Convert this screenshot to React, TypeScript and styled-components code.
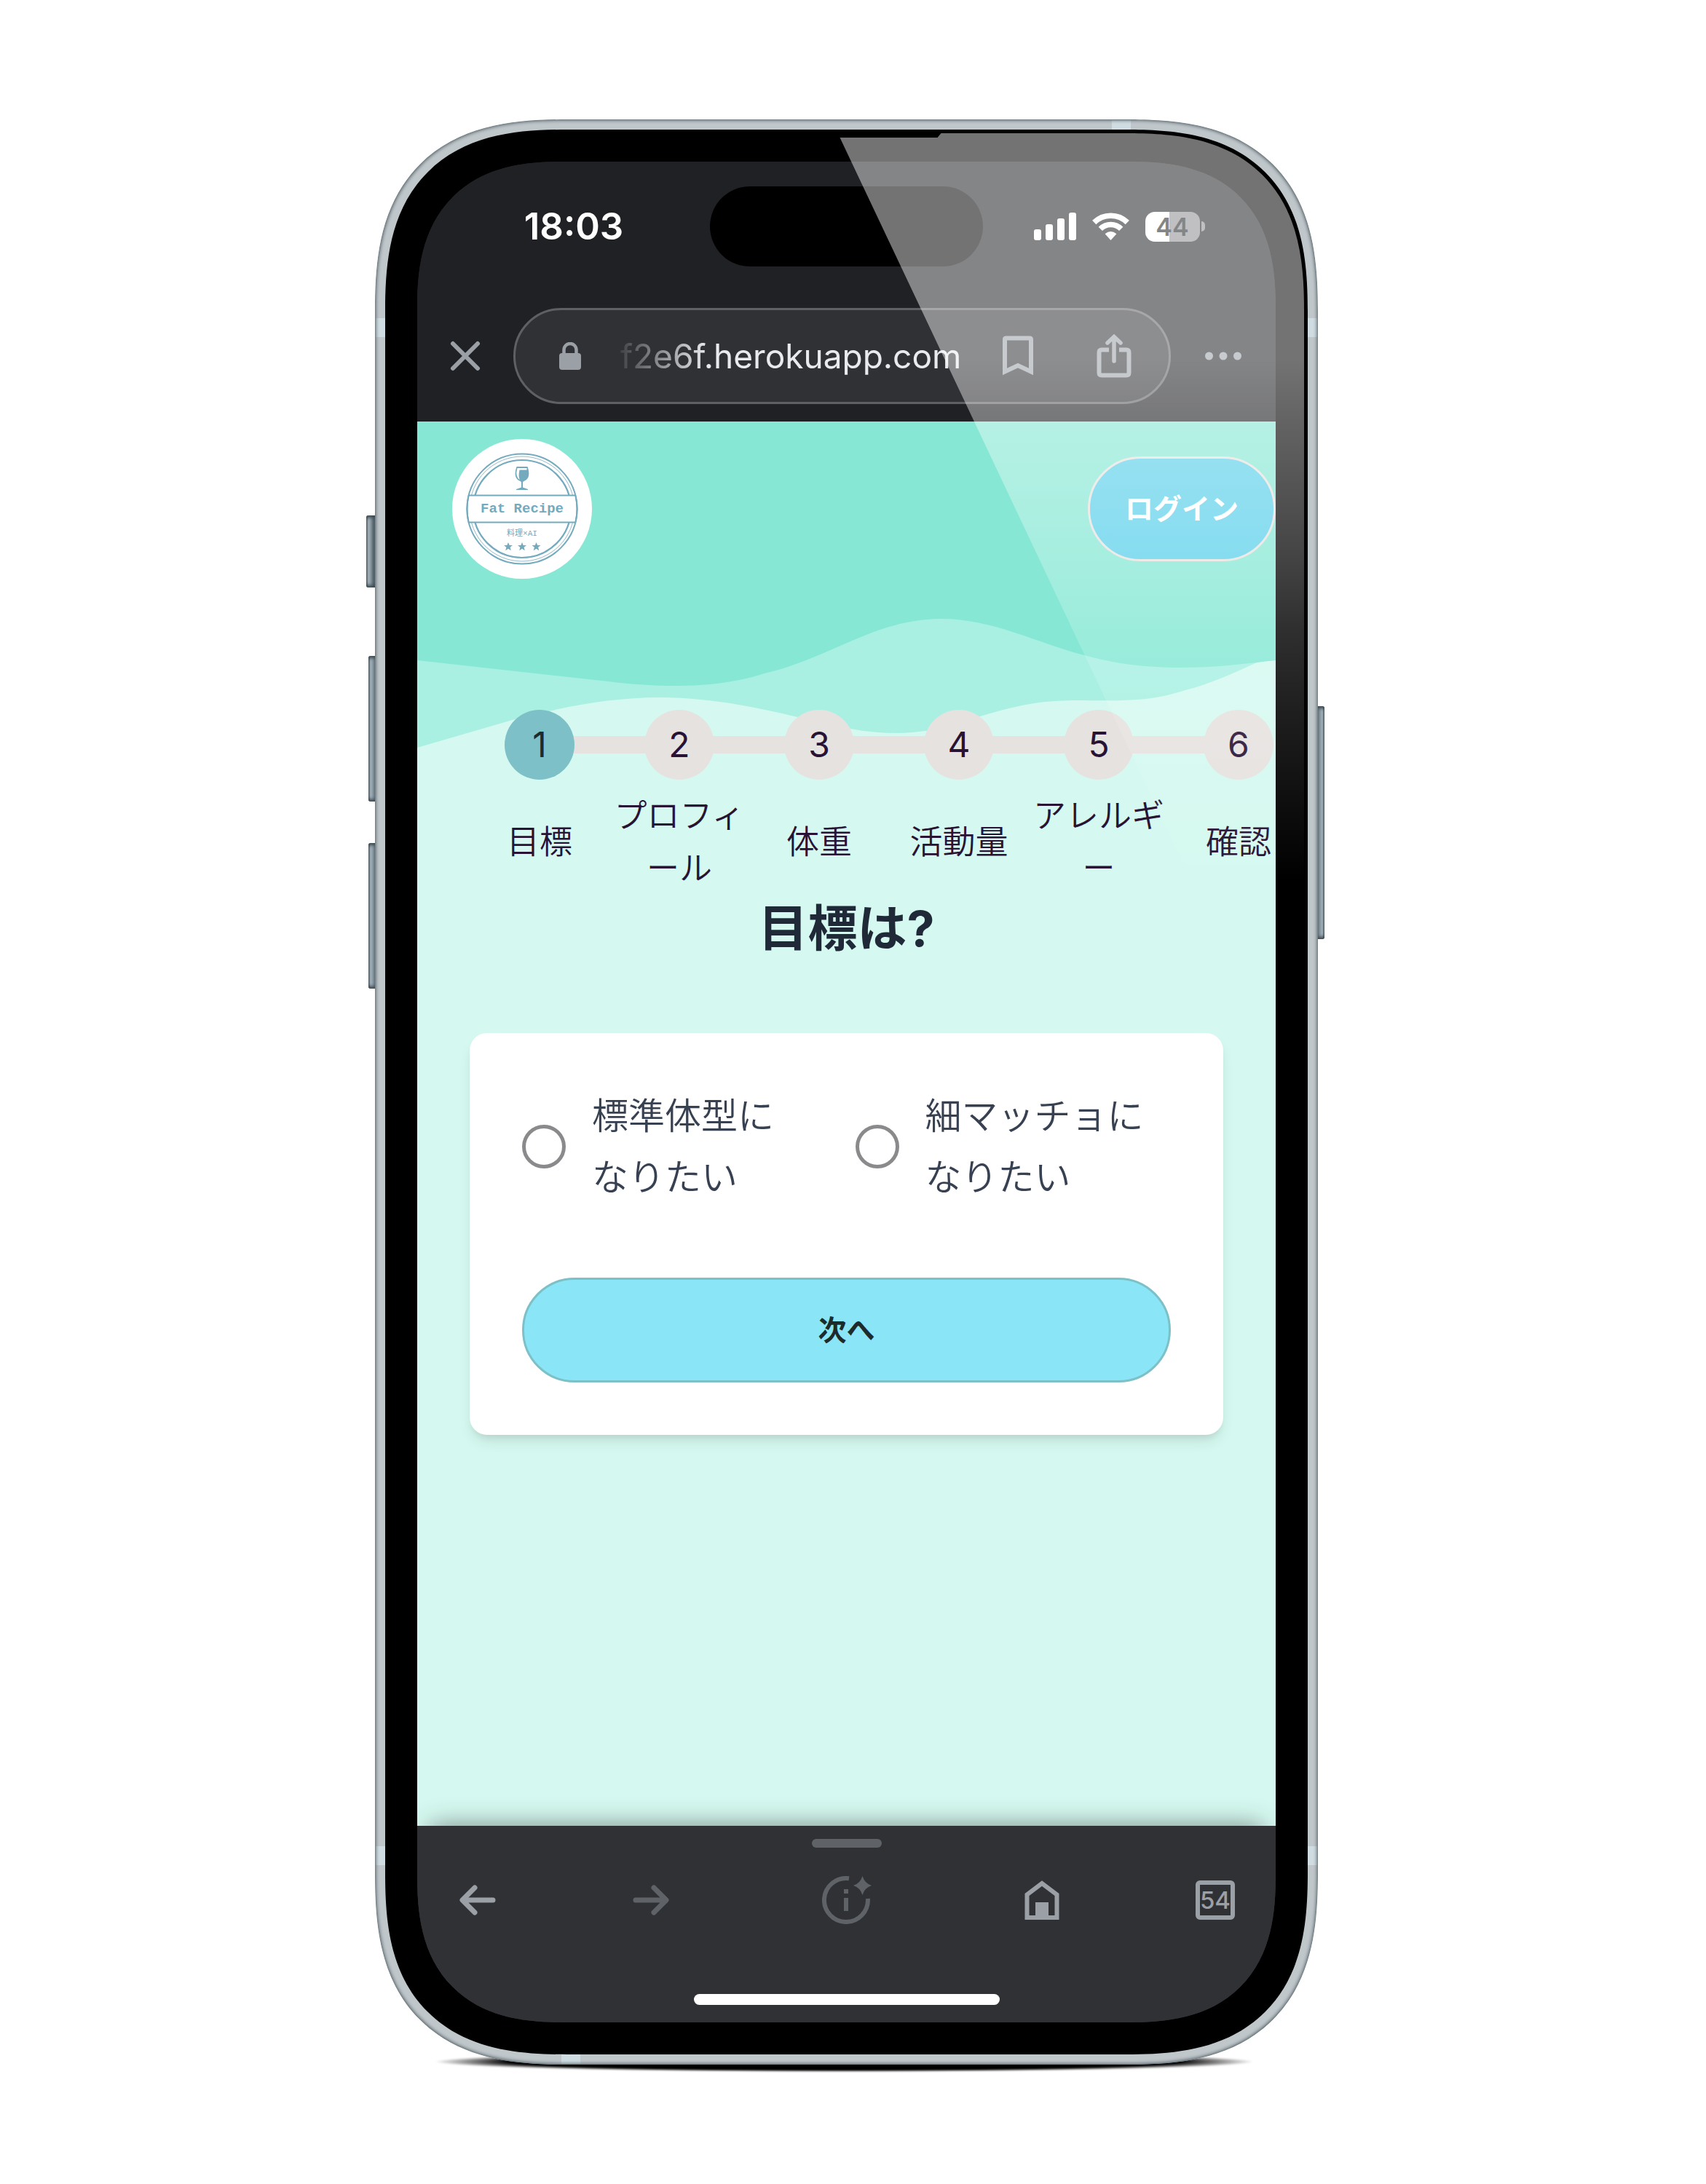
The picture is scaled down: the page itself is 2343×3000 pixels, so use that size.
import React, { useState } from "react";
import styled, { createGlobalStyle } from "styled-components";

const latin = `Inter, "Noto Sans CJK JP", sans-serif`;

const GlobalStyle = createGlobalStyle`
  *, *::before, *::after { box-sizing: border-box; }
  body { margin: 0; background: #ffffff; font-family: ${latin}; }
  button, input { font-family: inherit; }
  button { cursor: pointer; }
`;

/* ---------- device ---------- */

const Stage = styled.div`
  min-height: 100vh;
  display: flex;
  align-items: center;
  justify-content: center;
  padding-right: 18px;
  overflow: hidden;
`;

const Device = styled.div`
  position: relative;
  isolation: isolate;
  width: 100%;
  max-width: 1295px;
`;

const FloorShadow = styled.div`
  position: absolute;
  z-index: -2;
  left: 82px;
  right: 88px;
  bottom: -10px;
  height: 28px;
  background: radial-gradient(closest-side, #000000 82%, transparent);
  filter: blur(1px);
`;

const SideKey = styled.div<{ $side: "left" | "right"; $top: number; $height: number; $depth: number }>`
  position: absolute;
  z-index: -1;
  ${(p) => p.$side}: ${(p) => -p.$depth}px;
  top: ${(p) => p.$top}px;
  width: 20px;
  height: ${(p) => p.$height}px;
  border-radius: 3px;
  background: linear-gradient(
    to ${(p) => (p.$side === "left" ? "right" : "left")},
    #4f5d66 0,
    #a3b0b9 3px,
    #8a98a1 6px,
    #52616a 10px
  );
  box-shadow: inset 0 5px 4px -2px #3b484f, inset 0 -5px 4px -2px #3b484f;
`;

const Metal = styled.div`
  position: relative;
  overflow: hidden;
  padding: 14px;
  border-radius: 215px;
  background: #c0c7cb;
  @supports (corner-shape: superellipse(1.38)) {
    border-radius: 264px;
    corner-shape: superellipse(1.38);
  }
  &::after {
    content: "";
    position: absolute;
    inset: 0;
    border-radius: inherit;
    corner-shape: inherit;
    box-shadow: inset 0 0 5px 1px #46555b;
    pointer-events: none;
  }
`;

const Antenna = styled.div<{ $edge: "top" | "bottom" | "left" | "right"; $from: "top" | "bottom" | "left" | "right"; $at: number }>`
  position: absolute;
  ${(p) => p.$edge}: 1px;
  ${(p) => p.$from}: ${(p) => p.$at}px;
  width: 26px;
  height: 26px;
  background: #cfdde2;
`;

const Bezel = styled.div`
  position: relative;
  overflow: hidden;
  padding: 44px;
  border-radius: 202px;
  background: #000000;
  @supports (corner-shape: superellipse(1.38)) {
    border-radius: 250px;
    corner-shape: superellipse(1.38);
  }
`;

const Screen = styled.div`
  position: relative;
  overflow: hidden;
  display: flex;
  flex-direction: column;
  border-radius: 165px;
  background: linear-gradient(#202124 50%, #303135 50%);
  @supports (corner-shape: superellipse(1.33)) {
    border-radius: 202px;
    corner-shape: superellipse(1.33);
  }
`;

const Glare = styled.div`
  position: absolute;
  inset: 5px;
  pointer-events: none;
  border-radius: 198px;
  overflow: hidden;
  @supports (corner-shape: superellipse(1.38)) {
    border-radius: 245px;
    corner-shape: superellipse(1.38);
  }
  &::before {
    content: "";
    display: block;
    height: 1040px;
    background: linear-gradient(
      rgba(255, 255, 255, 0.45) 310px,
      rgba(255, 255, 255, 0.39) 397px,
      rgba(255, 255, 255, 0.27) 577px,
      rgba(255, 255, 255, 0.19) 677px,
      rgba(255, 255, 255, 0.13) 777px,
      rgba(255, 255, 255, 0) 1030px
    );
    clip-path: polygon(
      calc(50% - 9px) 6px,
      calc(50% + 125px) 6px,
      calc(50% + 130px) 0,
      100% 0,
      100% 100%,
      calc(50% + 480px) 100%
    );
  }
`;

/* ---------- browser chrome ---------- */

const Chrome = styled.header`
  background: #202124;
  padding-bottom: 24px;
`;

const StatusBar = styled.div`
  display: grid;
  grid-template-columns: 1fr 375px 1fr;
  align-items: center;
  height: 178px;
  margin-bottom: 23px;
`;

const Clock = styled.time`
  padding-left: 28px;
  text-align: center;
  font-size: 51px;
  line-height: 60px;
  font-weight: 600;
  color: #ffffff;
`;

const Island = styled.div`
  height: 110px;
  border-radius: 55px;
  background: #000000;
`;

const StatusIcons = styled.div`
  display: flex;
  align-items: center;
  justify-content: center;
  gap: 22px;
  padding-right: 28px;
`;

const Battery = styled.div`
  display: flex;
  align-items: center;
  gap: 2px;
`;

const BatteryCell = styled.div`
  width: 75px;
  height: 41px;
  border-radius: 13px;
  background: linear-gradient(to right, #ffffff 44%, #8d8d90 44%);
  text-align: center;
  font-size: 34px;
  line-height: 41px;
  font-weight: 600;
  color: #202124;
`;

const BatteryNub = styled.div`
  width: 5px;
  height: 14px;
  border-radius: 0 5px 5px 0;
  background: #8d8d90;
`;

const Toolbar = styled.div`
  display: grid;
  grid-template-columns: 132px minmax(0, 1fr) 144px;
  align-items: center;
`;

const IconButton = styled.button<{ $tone?: string }>`
  display: flex;
  align-items: center;
  justify-content: center;
  padding: 0;
  border: 0;
  background: none;
  color: ${(p) => p.$tone ?? "#9aa0a6"};
`;

const AddressBar = styled.div`
  display: flex;
  align-items: center;
  height: 132px;
  padding: 0 51px 0 60px;
  border: 3px solid #5f6064;
  border-radius: 66px;
  background: #303135;
`;

const Address = styled.input`
  flex: 1;
  min-width: 0;
  margin: 0 34px 0 54px;
  padding: 0;
  border: 0;
  outline: 0;
  background: none;
  color: #e8eaed;
  font-size: 46px;
  line-height: 60px;
  mask-image: linear-gradient(to right, rgba(0, 0, 0, 0.1), #000000 120px);
`;

const AddressActions = styled.div`
  display: flex;
  gap: 84px;
`;

/* ---------- page ---------- */

const Page = styled.main`
  position: relative;
  isolation: isolate;
  min-height: 1929px;
  background: #d5f9f0;
`;

const Waves = styled.svg`
  position: absolute;
  z-index: -1;
  top: 0;
  left: 0;
  width: 100%;
  height: 450px;
`;

const SiteHeader = styled.div`
  display: flex;
  align-items: center;
  justify-content: space-between;
  padding: 24px 0 24px 48px;
`;

const LogoLink = styled.a`
  display: block;
  width: 192px;
  height: 192px;
  border-radius: 50%;
  background: #ffffff;
`;

const Pill = styled.button<{ $variant: "login" | "next" }>`
  height: 144px;
  padding: 0 48px;
  border: 3px solid ${(p) => (p.$variant === "login" ? "#e7e2df" : "#7dc0c7")};
  border-radius: 72px;
  background: ${(p) => (p.$variant === "login" ? "#5bd0ea" : "#8ae6f6")};
  color: ${(p) => (p.$variant === "login" ? "#ffffff" : "#1d2b2b")};
  font-size: 39px;
  line-height: 48px;
  font-weight: 700;
`;

const Steps = styled.ol`
  display: grid;
  grid-template-columns: repeat(6, 192px);
  margin: 142px 0 0;
  padding: 0 0 0 72px;
  overflow: hidden;
  list-style: none;
  color: #291334;
`;

const Track = styled.div`
  display: flex;
  align-items: center;
  height: 124px;
`;

const Rail = styled.span<{ $hidden?: boolean }>`
  flex: 1;
  height: 24px;
  margin: 0 -2px;
  background: ${(p) => (p.$hidden ? "transparent" : "#e6e2e0")};
`;

const Dot = styled.span<{ $active: boolean }>`
  z-index: 1;
  display: flex;
  align-items: center;
  justify-content: center;
  width: 96px;
  height: 96px;
  border-radius: 50%;
  background: ${(p) => (p.$active ? "#7dc0c7" : "#e6e2e0")};
  color: ${(p) => (p.$active ? "#1d2b2b" : "#291334")};
  font-size: 48px;
  line-height: 72px;
`;

const StepLabel = styled.div`
  display: flex;
  flex-direction: column;
  align-items: center;
  justify-content: center;
  height: 144px;
  font-size: 45px;
  line-height: 72px;
  font-weight: 350;
  white-space: nowrap;
`;

const Heading = styled.h1`
  margin: 0 0 98px;
  text-align: center;
  font-size: 68px;
  line-height: 92px;
  font-weight: 700;
  color: #1f2937;
`;

const Card = styled.form`
  display: grid;
  gap: 96px;
  margin: 0 72px;
  padding: 72px;
  border-radius: 24px;
  background: #ffffff;
  box-shadow: 0 12px 18px -3px rgba(0, 0, 0, 0.1), 0 6px 12px -6px rgba(0, 0, 0, 0.1);
`;

const Choices = styled.fieldset`
  display: grid;
  grid-template-columns: 1fr 1fr;
  gap: 24px;
  min-width: 0;
  margin: 0;
  padding: 0;
  border: 0;
`;

const Choice = styled.label`
  display: flex;
  align-items: center;
  gap: 36px;
  font-size: 50px;
  line-height: 84px;
  font-weight: 350;
  color: #374151;
  white-space: nowrap;
`;

const Radio = styled.input`
  appearance: none;
  flex: none;
  width: 60px;
  height: 60px;
  margin: 0;
  border: 5px solid #8a8a8c;
  border-radius: 50%;
  &:checked {
    background: radial-gradient(circle, #7dc0c7 45%, transparent 50%);
  }
`;

/* ---------- bottom navigation ---------- */

const BottomBar = styled.nav`
  position: relative;
  display: flex;
  flex-direction: column;
  align-items: center;
  height: 270px;
  padding: 18px 47px 24px;
  background: #303135;
  box-shadow: 0 -18px 33px -18px rgba(0, 0, 0, 0.45);
`;

const Grabber = styled.div`
  width: 96px;
  height: 12px;
  border-radius: 6px;
  background: #5f6368;
`;

const NavRow = styled.div`
  display: flex;
  justify-content: space-between;
  align-items: center;
  align-self: stretch;
  height: 72px;
  margin: 36px 0 auto;
`;

const NavButton = styled(IconButton)<{ $wide?: boolean }>`
  width: ${(p) => (p.$wide ? 132 : 72)}px;
  height: 72px;
`;

const TabCount = styled.span`
  display: flex;
  align-items: center;
  justify-content: center;
  width: 54px;
  height: 54px;
  border: 6px solid currentColor;
  border-radius: 6px;
  font-size: 33px;
  line-height: 42px;
  font-weight: 500;
`;

const HomeIndicator = styled.div`
  width: 420px;
  height: 15px;
  border-radius: 8px;
  background: #ffffff;
`;

/* ---------- drawings ---------- */

const line = { fill: "none", stroke: "currentColor", strokeWidth: 6 } as const;

const SignalIcon = () => (
  <svg width="58" height="38" viewBox="0 0 58 38" fill="#fff" aria-hidden="true">
    <rect x="0" y="23" width="10" height="15" rx="3" />
    <rect x="16" y="16" width="10" height="22" rx="3" />
    <rect x="32" y="8" width="10" height="30" rx="3" />
    <rect x="48" y="0" width="10" height="38" rx="3" />
  </svg>
);

const WifiIcon = () => (
  <svg width="51" height="38" viewBox="0 0 51 38" aria-hidden="true">
    <g fill="none" stroke="#fff" strokeWidth="7.5">
      <path d="M2.7 13.5A32.5 32.5 0 0 1 48.3 13.5" />
      <path d="M11.3 22.3A20 20 0 0 1 39.7 22.3" />
    </g>
    <path d="M25.5 38L17.6 29.2Q25.5 22.6 33.4 29.2Z" fill="#fff" />
  </svg>
);

const CloseIcon = () => (
  <svg width="42" height="42" viewBox="0 0 42 42" aria-hidden="true">
    <path d="M4 4L38 38M38 4L4 38" {...line} strokeLinecap="round" />
  </svg>
);

const LockIcon = () => (
  <svg width="30" height="38" viewBox="0 0 30 38" fill="#9aa0a6" aria-hidden="true">
    <rect y="15" width="30" height="23" rx="4" />
    <path d="M6.5 18V10.5A8.5 8.5 0 0 1 23.5 10.5V18" fill="none" stroke="#9aa0a6" strokeWidth="4.5" />
  </svg>
);

const BookmarkIcon = () => (
  <svg width="48" height="60" viewBox="0 0 48 60" aria-hidden="true">
    <path d="M6 51.5V7Q6 5.5 8 5.5H40Q42 5.5 42 7.5V51.5L24 43Z" {...line} />
  </svg>
);

const ShareIcon = () => (
  <svg width="48" height="60" viewBox="0 0 48 60" aria-hidden="true">
    <path d="M17 21.5H7Q3.5 21.5 3.5 25V53Q3.5 56.5 7 56.5H41Q44.5 56.5 44.5 53V25Q44.5 21.5 41 21.5H31" {...line} />
    <path d="M24 37V5M15 12L24 3.5L33 12" {...line} strokeWidth={5.5} strokeLinecap="round" />
  </svg>
);

const MoreIcon = () => (
  <svg width="50" height="12" viewBox="0 0 50 12" fill="currentColor" aria-hidden="true">
    <circle cx="5.5" cy="6" r="5.5" />
    <circle cx="25" cy="6" r="5.5" />
    <circle cx="44.5" cy="6" r="5.5" />
  </svg>
);

const ArrowIcon = ({ flip }: { flip?: boolean }) => (
  <svg width="50" height="42" viewBox="0 0 50 42" aria-hidden="true">
    <path
      d={flip ? "M4 21H45M29 4L46 21L29 38" : "M46 21H5M21 4L4 21L21 38"}
      {...line}
      strokeWidth={7}
      strokeLinecap="round"
      strokeLinejoin="round"
    />
  </svg>
);

const InfoSparkIcon = () => (
  <svg width="68" height="66" viewBox="0 0 68 66" aria-hidden="true">
    <path d="M37 3.3A30 30 0 1 0 62.9 31" {...line} />
    <path d="M30 18h6v6h-6zM30 30h6v18h-6z" fill="currentColor" />
    <path d="M55.5 0Q58.5 10 68 13Q58.5 16 55.5 26Q52.5 16 43 13Q52.5 10 55.5 0Z" fill="currentColor" />
  </svg>
);

const HomeIcon = () => (
  <svg width="48" height="54" viewBox="0 0 48 54" aria-hidden="true">
    <path d="M3.5 51V19.5L24 4L44.5 19.5V51Z" {...line} />
    <rect x="15" y="30" width="18" height="22" fill="currentColor" />
  </svg>
);

const star = "M0 -6L1.7 -2H6L2.6 0.8L3.8 5.2L0 2.7L-3.8 5.2L-2.6 0.8L-6 -2H-1.7Z";

const Logo = () => (
  <svg width="192" height="192" viewBox="0 0 192 192" role="img" aria-label="Fat Recipe">
    <g fill="none" stroke="#73aabd">
      <circle cx="96" cy="96" r="75.5" strokeWidth="2" />
      <circle cx="96" cy="96" r="72" strokeWidth="0.8" />
      <circle cx="96" cy="96" r="67" strokeWidth="2.2" />
    </g>
    <path d="M23 77.5H169V114.5H23Z" fill="#fff" />
    <path d="M22.5 77.5H169.5M22.5 114.5H169.5" stroke="#73aabd" strokeWidth="2" />
    <path d="M22.8 77A75.5 75.5 0 0 0 22.8 115M169.2 77A75.5 75.5 0 0 1 169.2 115" fill="none" stroke="#73aabd" strokeWidth="2" />
    <g fill="#73aabd">
      <path d="M88.5 38H103.500Q109 54 98.500 58Q97 58.500 97 60V66.500L104 69V70H88V69L95 66.500V60Q95 58.500 93.500 58Q83 54 88.500 38Z" />
      <path d="M89.5 40H102.5V42.500H92.5Q90.5 52 93 56Q86 52 89.5 40Z" fill="#fff" />
      {[77, 96, 115.5].map((x) => (
        <path key={x} d={star} transform={`translate(${x} 148)`} />
      ))}
    </g>
    <text x="96" y="101" textAnchor="middle" fill="#73aabd" fontFamily='"Liberation Mono", monospace' fontSize="19" fontWeight="700">
      Fat Recipe
    </text>
    <text x="96" y="133" textAnchor="middle" fill="#73aabd" fontFamily='"Liberation Mono", "Noto Sans CJK JP", monospace' fontSize="11">
      料理×AI
    </text>
  </svg>
);

/* ---------- app ---------- */

const steps = [["目標"], ["プロフィ", "ール"], ["体重"], ["活動量"], ["アレルギ", "ー"], ["確認"]];

const goals = [
  { id: "standard", lines: ["標準体型に", "なりたい"] },
  { id: "lean", lines: ["細マッチョに", "なりたい"] },
];

export default function App() {
  const [url, setUrl] = useState("f2e6f.herokuapp.com");
  const [goal, setGoal] = useState("");

  return (
    <Stage>
      <GlobalStyle />
      <Device lang="ja">
        <FloorShadow />
        <SideKey $side="left" $top={544} $height={99} $depth={12} />
        <SideKey $side="left" $top={737} $height={200} $depth={9} />
        <SideKey $side="left" $top={994} $height={200} $depth={9} />
        <SideKey $side="right" $top={806} $height={320} $depth={9} />
        <Metal>
          <Antenna $edge="top" $from="right" $at={257} />
          <Antenna $edge="left" $from="top" $at={273} />
          <Antenna $edge="right" $from="top" $at={273} />
          <Antenna $edge="left" $from="bottom" $at={274} />
          <Antenna $edge="right" $from="bottom" $at={274} />
          <Antenna $edge="bottom" $from="left" $at={256} />
          <Bezel>
            <Screen>
              <Chrome>
                <StatusBar>
                  <Clock>18:03</Clock>
                  <Island />
                  <StatusIcons>
                    <SignalIcon />
                    <WifiIcon />
                    <Battery>
                      <BatteryCell>44</BatteryCell>
                      <BatteryNub />
                    </Battery>
                  </StatusIcons>
                </StatusBar>
                <Toolbar>
                  <IconButton aria-label="閉じる">
                    <CloseIcon />
                  </IconButton>
                  <AddressBar>
                    <LockIcon />
                    <Address aria-label="アドレス" value={url} onChange={(e) => setUrl(e.target.value)} />
                    <AddressActions>
                      <IconButton aria-label="ブックマーク">
                        <BookmarkIcon />
                      </IconButton>
                      <IconButton aria-label="共有">
                        <ShareIcon />
                      </IconButton>
                    </AddressActions>
                  </AddressBar>
                  <IconButton aria-label="メニュー">
                    <MoreIcon />
                  </IconButton>
                </Toolbar>
              </Chrome>

              <Page>
                <Waves viewBox="0 0 1179 450" preserveAspectRatio="none" aria-hidden="true">
                  <path
                    fill="#a9f0e3"
                    d="M0 0H1179V328C1170 328 1160 329 1151 332C1120 346 1090 360 1055 369C1033 376 1010 381 988 382C960 384 930 383 907 383C890 383 870 384 854 386C825 390 800 397 773 405C740 417 700 428 660 428C638 428 616 426 595 422C570 418 546 412 522 406C460 391 397 379 334 379C284 379 234 386 185 397C168 401 150 405 134 409L0 448Z"
                  />
                  <path
                    fill="#86e8d4"
                    d="M0 0H1179V328C1136 333 1093 338 1050 338C1000 338 960 333 916 321C850 304 790 271 720 271C690 271 660 277 627 289C577 308 530 334 477 346C440 358 400 363 358 363C325 363 294 361 262 357L0 328Z"
                  />
                </Waves>
                <SiteHeader>
                  <LogoLink href="#">
                    <Logo />
                  </LogoLink>
                  <Pill $variant="login">ログイン</Pill>
                </SiteHeader>

                <Steps>
                  {steps.map((lines, i) => (
                    <li key={i}>
                      <Track>
                        <Rail $hidden={i === 0} />
                        <Dot $active={i === 0}>{i + 1}</Dot>
                        <Rail $hidden={i === steps.length - 1} />
                      </Track>
                      <StepLabel>
                        {lines.map((text) => (
                          <span key={text}>{text}</span>
                        ))}
                      </StepLabel>
                    </li>
                  ))}
                </Steps>

                <Heading>目標は?</Heading>

                <Card onSubmit={(e) => e.preventDefault()}>
                  <Choices aria-label="目標">
                    {goals.map(({ id, lines }) => (
                      <Choice key={id} htmlFor={id}>
                        <Radio type="radio" id={id} name="goal" checked={goal === id} onChange={() => setGoal(id)} />
                        <span>
                          {lines[0]}
                          <br />
                          {lines[1]}
                        </span>
                      </Choice>
                    ))}
                  </Choices>
                  <Pill $variant="next" type="submit">
                    次へ
                  </Pill>
                </Card>
              </Page>

              <BottomBar>
                <Grabber />
                <NavRow>
                  <NavButton aria-label="戻る">
                    <ArrowIcon />
                  </NavButton>
                  <NavButton aria-label="進む" $tone="#5f6368">
                    <ArrowIcon flip />
                  </NavButton>
                  <NavButton aria-label="ページ情報" $tone="#5f6368" $wide>
                    <InfoSparkIcon />
                  </NavButton>
                  <NavButton aria-label="ホーム">
                    <HomeIcon />
                  </NavButton>
                  <NavButton aria-label="タブ">
                    <TabCount>54</TabCount>
                  </NavButton>
                </NavRow>
                <HomeIndicator />
              </BottomBar>
            </Screen>
            <Glare />
          </Bezel>
        </Metal>
      </Device>
    </Stage>
  );
}
